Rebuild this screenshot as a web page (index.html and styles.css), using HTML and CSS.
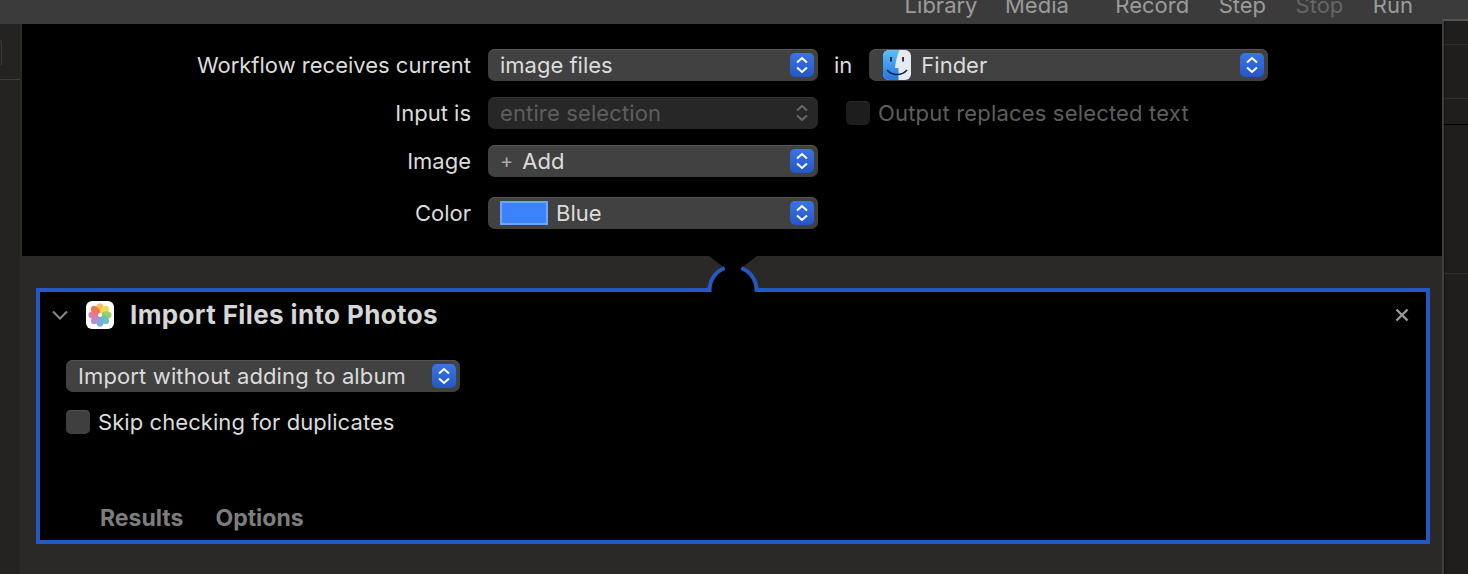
FILE: index.html
```html
<!DOCTYPE html>
<html lang="en">

<head>
    <meta charset="UTF-8" />
    <title>Automator - Quick Action</title>
    <link rel="stylesheet" href="styles.css">
</head>

<body>
    <div class="toolbar">
        <span class="tight">Library</span>
        <span class="gap-right">Media</span>
        <span>Record</span>
        <span>Step</span>
        <span class="off">Stop</span>
        <span>Run</span>
    </div>

    <div class="window">
        <div class="sidebar">
            <div class="sidebar-field"></div>
            <div class="sidebar-line"></div>
        </div>

        <div class="main">
            <div class="workflow-form">
                <label>Workflow receives current</label>
                <div class="form-row">
                    <div class="popup popup-short">
                        <span class="popup-text">image files</span>
                        <span class="stepper"><svg viewBox="0 0 12 18" width="12" height="18"><path d="M1 6.500 6 2 11 6.500M1 11.500 6 16 11 11.500" /></svg></span>
                    </div>
                    <span class="in-label">in</span>
                    <div class="popup popup-long">
                        <svg class="finder-icon" viewBox="0 0 28 30" width="28" height="30">
                            <defs>
                                <linearGradient id="finderBlue" x1="0" y1="0" x2="0" y2="1">
                                    <stop offset="0" stop-color="#5cc0f6" />
                                    <stop offset="1" stop-color="#2374e6" />
                                </linearGradient>
                            </defs>
                            <rect width="28" height="30" rx="6" fill="#e6eaf0" />
                            <path d="M6 0H16.500C14 6 12.500 12 12 18H15.500V30H6A6 6 0 0 1 0 24V6A6 6 0 0 1 6 0Z" fill="url(#finderBlue)" />
                            <path d="M8 7V11.500M20 7V11.500" stroke="#15233a" stroke-width="1.800" fill="none" />
                            <path d="M4 20C9 26 19 26 24 20" stroke="#15233a" stroke-width="1.500" fill="none" />
                        </svg>
                        <span class="popup-text">Finder</span>
                        <span class="stepper"><svg viewBox="0 0 12 18" width="12" height="18"><path d="M1 6.500 6 2 11 6.500M1 11.500 6 16 11 11.500" /></svg></span>
                    </div>
                </div>

                <label>Input is</label>
                <div class="form-row">
                    <div class="popup popup-short popup-off">
                        <span class="popup-text">entire selection</span>
                        <span class="stepper"><svg viewBox="0 0 12 18" width="12" height="18"><path d="M1 6.500 6 2 11 6.500M1 11.500 6 16 11 11.500" /></svg></span>
                    </div>
                    <div class="check-wrap check-off">
                        <span class="checkbox"></span>
                        <span>Output replaces selected text</span>
                    </div>
                </div>

                <label>Image</label>
                <div class="form-row">
                    <div class="popup popup-short">
                        <span class="plus">+</span>
                        <span class="popup-text">Add</span>
                        <span class="stepper"><svg viewBox="0 0 12 18" width="12" height="18"><path d="M1 6.500 6 2 11 6.500M1 11.500 6 16 11 11.500" /></svg></span>
                    </div>
                </div>

                <label class="color-row">Color</label>
                <div class="form-row color-row">
                    <div class="popup popup-short">
                        <span class="swatch"></span>
                        <span class="popup-text">Blue</span>
                        <span class="stepper"><svg viewBox="0 0 12 18" width="12" height="18"><path d="M1 6.500 6 2 11 6.500M1 11.500 6 16 11 11.500" /></svg></span>
                    </div>
                </div>
            </div>

            <div class="actions">
                <div class="action-card">
                    <div class="action-head">
                        <svg class="chevron" viewBox="0 0 18 12" width="18" height="12"><path d="M2 2.500 9 9.500 16 2.500" /></svg>
                        <svg class="photos-icon" viewBox="0 0 28 28" width="28" height="28">
                            <rect width="28" height="28" rx="6" fill="#ffffff" />
                            <g opacity="0.85">
                                <ellipse cx="14" cy="7.500" rx="3.800" ry="5.200" fill="#f5b82e" />
                                <ellipse cx="14" cy="7.500" rx="3.800" ry="5.200" fill="#f0d43a" transform="rotate(45 14 14)" />
                                <ellipse cx="14" cy="7.500" rx="3.800" ry="5.200" fill="#8cc751" transform="rotate(90 14 14)" />
                                <ellipse cx="14" cy="7.500" rx="3.800" ry="5.200" fill="#57b8a4" transform="rotate(135 14 14)" />
                                <ellipse cx="14" cy="7.500" rx="3.800" ry="5.200" fill="#5c9ee0" transform="rotate(180 14 14)" />
                                <ellipse cx="14" cy="7.500" rx="3.800" ry="5.200" fill="#a07cc8" transform="rotate(225 14 14)" />
                                <ellipse cx="14" cy="7.500" rx="3.800" ry="5.200" fill="#d866a0" transform="rotate(270 14 14)" />
                                <ellipse cx="14" cy="7.500" rx="3.800" ry="5.200" fill="#ec5f3f" transform="rotate(315 14 14)" />
                            </g>
                            <circle cx="14" cy="14" r="2" fill="#ffffff" />
                        </svg>
                        <h2>Import Files into Photos</h2>
                        <svg class="close" viewBox="0 0 14 14" width="14" height="14"><path d="M1.500 1.500 12.500 12.500M12.500 1.500 1.500 12.500" /></svg>
                    </div>

                    <div class="action-body">
                        <div class="popup popup-album">
                            <span class="popup-text">Import without adding to album</span>
                            <span class="stepper"><svg viewBox="0 0 12 18" width="12" height="18"><path d="M1 6.500 6 2 11 6.500M1 11.500 6 16 11 11.500" /></svg></span>
                        </div>
                        <div class="check-wrap">
                            <span class="checkbox"></span>
                            <span>Skip checking for duplicates</span>
                        </div>
                    </div>

                    <div class="action-tabs">
                        <span>Results</span>
                        <span>Options</span>
                    </div>
                </div>

                <!-- notch where the action joins the workflow -->
                <svg class="notch" viewBox="0 0 52 38" width="52" height="38">
                    <path d="M2 0H50L34.300 12A23.500 23.500 0 0 1 49.500 34V38H2.500V34A23.500 23.500 0 0 1 17.700 12Z" fill="#000" />
                    <path d="M2.500 36V34A23.500 23.500 0 0 1 17.700 12M34.300 12A23.500 23.500 0 0 1 49.500 34V36" fill="none" stroke="#2459c4" stroke-width="4" />
                </svg>
            </div>
        </div>

        <div class="inspector">
            <div class="inspector-row row-a"></div>
            <div class="inspector-row row-b"></div>
            <div class="inspector-row row-c"></div>
            <div class="inspector-row row-d"></div>
        </div>
    </div>
</body>

</html>
```

FILE: styles.css
```css
* {
    box-sizing: border-box;
}

html,
body {
    height: 100%;
}

body {
    font-family: Inter, "Noto Sans", sans-serif;
    font-size: 22px;
    color: #dcdcdc;
    background-color: #2a2928;
    margin: 0;
    overflow: hidden;
    display: flex;
    flex-direction: column;
}

/* Toolbar, cut off by the top of the shot */
.toolbar {
    height: 24px;
    flex: none;
    background-color: #3b3b3b;
    display: flex;
    justify-content: flex-end;
    gap: 29.500px;
    padding-right: 55px;
    overflow: hidden;
    color: #9b9b9b;
    font-size: 22px;
    line-height: 24px;
}

.toolbar span {
    margin-top: -7px;
}

.toolbar .tight {
    margin-right: -2px;
}

.toolbar .gap-right {
    margin-right: 17px;
}

.toolbar .off {
    color: #666;
}

.window {
    flex: 1;
    display: flex;
    min-height: 0;
}

.sidebar {
    width: 22px;
    flex: none;
    background-color: #242321;
    border-right: 2px solid #2a2a28;
    padding-top: 16px;
}

.sidebar-field {
    width: 2px;
    height: 25px;
    border: 1px solid #3a3a3a;
    border-left: none;
    border-radius: 0 3px 3px 0;
}

.sidebar-line {
    height: 1px;
    margin-top: 14px;
    background-color: #3c3c3a;
}

.main {
    flex: 1;
    min-width: 0;
    display: flex;
    flex-direction: column;
}

.inspector {
    width: 26px;
    flex: none;
    margin-top: -5px;
    background-color: #1f1e1d;
    border-left: 2px solid #404040;
    box-shadow: inset 1px 0 0 #111;
    border-top: 2px solid #555;
}

.inspector-row {
    border-bottom: 1px solid #2d2d2d;
}

.row-a {
    height: 24px;
}

.row-b {
    height: 54px;
}

.row-c {
    height: 26px;
    border-bottom-color: #000;
}

.row-d {
    height: 149px;
}

/* Workflow settings */
.workflow-form {
    height: 232px;
    flex: none;
    background-color: #000;
    display: grid;
    grid-template-columns: 449px 1fr;
    grid-auto-rows: 32px;
    row-gap: 16px;
    column-gap: 17px;
    padding-top: 25px;
    align-items: center;
}

.workflow-form label {
    text-align: right;
}

.color-row {
    margin-top: 8px;
}

.form-row {
    display: flex;
    align-items: center;
}

.popup {
    height: 32px;
    display: flex;
    align-items: center;
    padding: 0 4px 0 12px;
    border-radius: 7px;
    background-color: #414141;
    box-shadow: inset 0 1px 0 #555;
}

.popup-short {
    width: 330px;
}

.popup-long {
    width: 399px;
    padding-left: 14px;
}

.popup-album {
    width: 394px;
    letter-spacing: 0.130px;
}

.popup-text {
    flex: 1;
    white-space: nowrap;
}

.popup-off {
    background-color: #272727;
    box-shadow: inset 0 1px 0 #303030;
    color: #5e5e5e;
    letter-spacing: 0.130px;
}

.stepper {
    width: 24px;
    height: 24px;
    flex: none;
    display: flex;
    align-items: center;
    justify-content: center;
    border-radius: 5px;
    background: linear-gradient(#3b74e4, #2456c6);
}

.stepper svg path {
    fill: none;
    stroke: #fff;
    stroke-width: 2;
}

.popup-off .stepper {
    background: none;
}

.popup-off .stepper svg path {
    stroke: #6a6a6a;
}

.in-label {
    margin: 0 17px 0 16px;
}

.finder-icon {
    margin-right: 10px;
    flex: none;
}

.plus {
    color: #aaa;
    font-size: 20px;
    margin-right: 9px;
}

.swatch {
    width: 48px;
    height: 24px;
    flex: none;
    margin-right: 8px;
    background-color: #3b82fb;
    border: 2px solid #6ea4fc;
}

.check-wrap {
    display: flex;
    align-items: center;
    gap: 8px;
    white-space: nowrap;
    letter-spacing: 0.070px;
}

.checkbox {
    width: 24px;
    height: 24px;
    flex: none;
    border-radius: 5px;
    background-color: #3f3f3f;
    box-shadow: inset 0 1px 0 #505050;
}

.check-off {
    margin-left: 28px;
    color: #5e5e5e;
    letter-spacing: 0.180px;
}

.check-off .checkbox {
    background-color: #1d1d1d;
    box-shadow: inset 0 1px 0 #2a2a2a;
}

/* Action card */
.actions {
    flex: 1;
    position: relative;
    padding: 32px 12px 30px 14px;
}

.action-card {
    height: 256px;
    background-color: #000;
    border: 4px solid #2459c4;
    display: flex;
    flex-direction: column;
}

.action-head {
    height: 45px;
    flex: none;
    display: flex;
    align-items: center;
    padding: 0 17px 0 11px;
}

.chevron {
    margin-right: 17px;
    flex: none;
}

.chevron path {
    fill: none;
    stroke: #8a8a8a;
    stroke-width: 2;
}

.photos-icon {
    margin-right: 16px;
    flex: none;
}

.action-head h2 {
    flex: 1;
    margin: 0;
    font-size: 26px;
    font-weight: 700;
    letter-spacing: 0.370px;
    color: #d6d6d6;
}

.close path {
    fill: none;
    stroke: #9a9a9a;
    stroke-width: 2.400;
}

.action-body {
    padding: 23px 0 0 26px;
    display: flex;
    flex-direction: column;
    gap: 17px;
    flex: 1;
}

.action-tabs {
    height: 44px;
    flex: none;
    display: flex;
    gap: 32px;
    padding-left: 60px;
    font-size: 23px;
    font-weight: 700;
    color: #7d7d7d;
    align-items: center;
}

.notch {
    position: absolute;
    left: 685px;
    top: 0;
}
```
